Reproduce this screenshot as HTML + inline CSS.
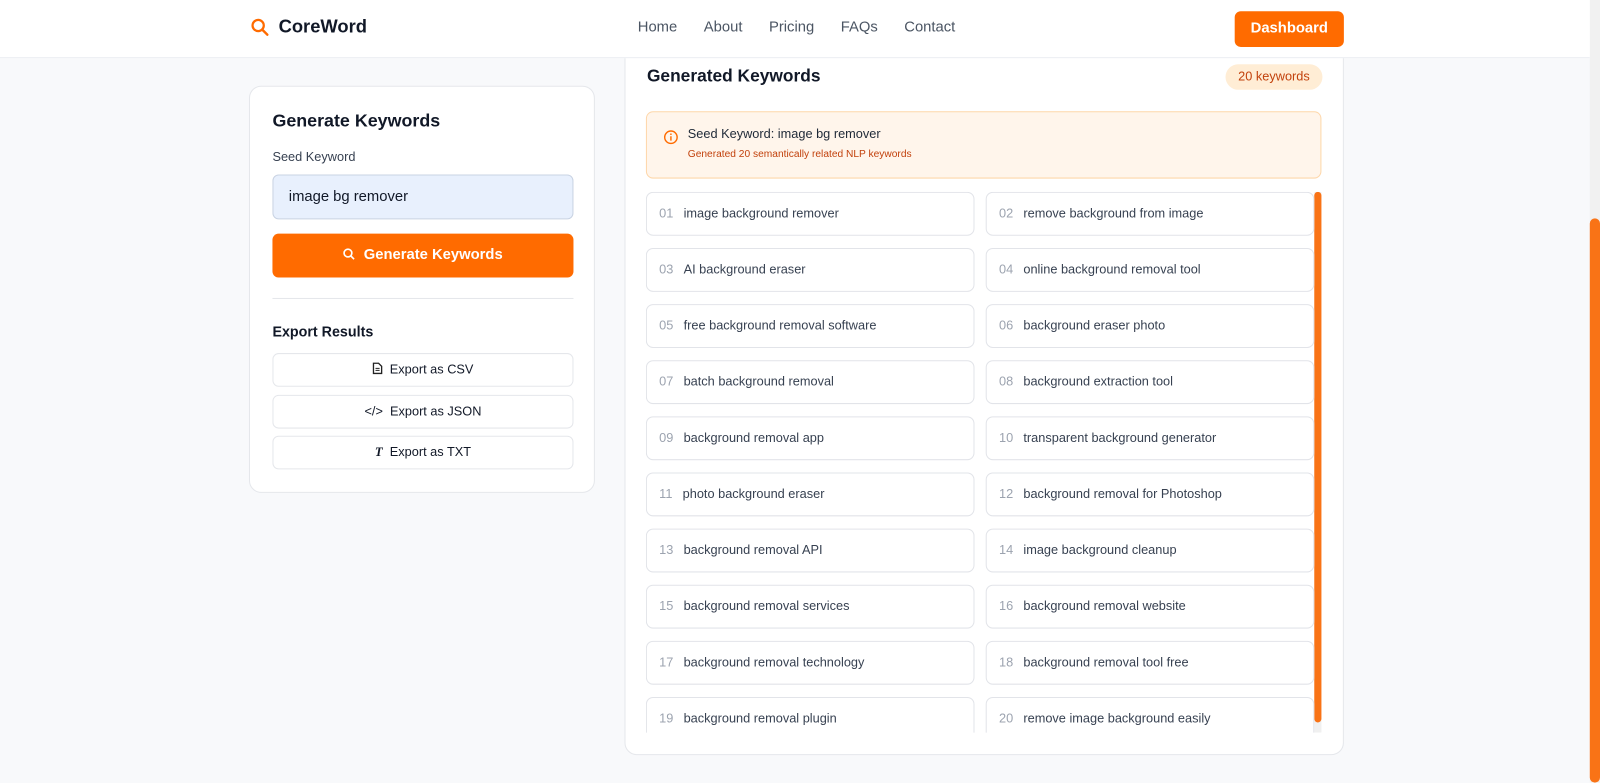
<!DOCTYPE html>
<html><head><style>
*{box-sizing:border-box;margin:0;padding:0}
body{width:1600px;height:783px;overflow:hidden;background:#f8f9fb;font-family:"Liberation Sans",sans-serif;color:#111827;position:relative}
#w{position:absolute;left:0;top:0;width:1568px;height:767px;transform:scale(1.020408);transform-origin:0 0}
.hdr{position:absolute;left:0;top:0;width:1558px;height:57px;background:#fff;border-bottom:1px solid #eceef2;z-index:5}
.logo{position:absolute;left:245px;top:16px;font-weight:bold;font-size:18px;display:flex;align-items:center;gap:8px}
.nav{position:absolute;left:625px;top:19px;font-size:14.5px;color:#4b5563}
.nav span{margin-right:26px}
.dash{position:absolute;left:1210px;top:11px;width:107px;height:35px;background:#ff6b00;color:#fff;border-radius:6px;font-weight:bold;font-size:14.5px;text-align:center;line-height:35px}
.lp{position:absolute;left:244px;top:84px;width:339px;height:399px;background:#fff;border:1px solid #e5e7eb;border-radius:12px}
.rp{position:absolute;left:612px;top:30px;width:705px;height:710px;background:#fff;border:1px solid #e5e7eb;border-radius:12px}
.inp{position:absolute;left:22px;top:86px;width:295px;height:44px;background:#e8f0fd;border:1px solid #c9d3e3;border-radius:6px;font-size:14.5px;padding:13px 15px}
.gen{position:absolute;left:22px;top:144px;width:295px;height:43px;background:#ff6b00;border-radius:6px;color:#fff;font-weight:bold;font-size:14.5px;text-align:center;line-height:43px}
.ex{position:absolute;left:22px;width:295px;height:33px;border:1px solid #e5e7eb;border-radius:6px;font-size:12.5px;text-align:center;line-height:31px}
.card{position:absolute;width:322px;height:43px;border:1px solid #e2e4e9;border-radius:7px;font-size:12.5px;color:#374151;line-height:41px;padding-left:12px;background:#fff}
.card b{font-weight:normal;color:#9ca3af;margin-right:10px}
</style></head><body>
<div id="w">
<div class="hdr">
<div class="logo"><svg width="20" height="20" viewBox="0 0 20 20"><circle cx="8" cy="8" r="5.5" fill="none" stroke="#ff6b00" stroke-width="2.2"/><line x1="12" y1="12" x2="17" y2="17" stroke="#ff6b00" stroke-width="2.4" stroke-linecap="round"/></svg>CoreWord</div>
<div class="nav"><span>Home</span><span>About</span><span>Pricing</span><span>FAQs</span><span>Contact</span></div>
<div class="dash">Dashboard</div>
</div>
<div class="lp">
<div style="position:absolute;left:22px;top:23px;font-size:17.5px;font-weight:bold">Generate Keywords</div>
<div style="position:absolute;left:22px;top:62px;font-size:12.5px;color:#374151">Seed Keyword</div>
<div class="inp">image bg remover</div>
<div class="gen"><svg width="12" height="12" viewBox="0 0 12 12" style="vertical-align:-1px"><circle cx="5" cy="5" r="3.8" fill="none" stroke="#fff" stroke-width="1.6"/><line x1="8" y1="8" x2="11" y2="11" stroke="#fff" stroke-width="1.6"/></svg>&nbsp; Generate Keywords</div>
<div style="position:absolute;left:22px;top:207px;width:295px;border-top:1px solid #e5e7eb"></div>
<div style="position:absolute;left:22px;top:232px;font-size:14px;font-weight:bold">Export Results</div>
<div class="ex" style="top:261px"><svg width="10" height="12" viewBox="0 0 10 12" style="vertical-align:-1px"><path d="M1 1h5l3 3v7H1z" fill="none" stroke="#222" stroke-width="1.3"/><path d="M3 6h4M3 8h4" stroke="#222" stroke-width="1"/></svg>&nbsp; Export as CSV</div>
<div class="ex" style="top:302px">&lt;/&gt;&nbsp; Export as JSON</div>
<div class="ex" style="top:342px"><i style="font-family:'Liberation Serif';font-weight:bold">T</i>&nbsp; Export as TXT</div>
</div>
<div class="rp">
<div style="position:absolute;left:21px;top:34px;font-size:17px;font-weight:bold">Generated Keywords</div>
<div style="position:absolute;left:588px;top:32px;width:95px;height:25px;background:#ffedd5;border-radius:13px;color:#c2410c;font-size:12.5px;text-align:center;line-height:25px">20 keywords</div>
<div style="position:absolute;left:20px;top:78px;width:662px;height:66px;background:#fff5eb;border:1px solid #fed7aa;border-radius:7px">
<svg style="position:absolute;left:16px;top:17px" width="15" height="15" viewBox="0 0 16 16"><circle cx="8" cy="8" r="6.5" fill="none" stroke="#ff6b00" stroke-width="1.5"/><line x1="8" y1="7" x2="8" y2="11.5" stroke="#ff6b00" stroke-width="1.5"/><circle cx="8" cy="4.8" r="0.9" fill="#ff6b00"/></svg>
<div style="position:absolute;left:40px;top:14px;font-size:12.5px;color:#1f2937">Seed Keyword: image bg remover</div>
<div style="position:absolute;left:40px;top:36px;font-size:10px;color:#c2410c">Generated 20 semantically related NLP keywords</div>
</div>
<div style="position:absolute;left:20px;top:157px;width:663px;height:530px;overflow:hidden">
<div style="position:absolute;left:655px;top:0;width:7px;height:530px;background:#f0f0f0"></div>
<div style="position:absolute;left:655px;top:0;width:7px;height:520px;background:#f97316;border-radius:4px"></div>
<div class="card" style="left:0;top:0"><b>01</b>image background remover</div>
<div class="card" style="left:333px;top:0"><b>02</b>remove background from image</div>
<div class="card" style="left:0;top:55px"><b>03</b>AI background eraser</div>
<div class="card" style="left:333px;top:55px"><b>04</b>online background removal tool</div>
<div class="card" style="left:0;top:110px"><b>05</b>free background removal software</div>
<div class="card" style="left:333px;top:110px"><b>06</b>background eraser photo</div>
<div class="card" style="left:0;top:165px"><b>07</b>batch background removal</div>
<div class="card" style="left:333px;top:165px"><b>08</b>background extraction tool</div>
<div class="card" style="left:0;top:220px"><b>09</b>background removal app</div>
<div class="card" style="left:333px;top:220px"><b>10</b>transparent background generator</div>
<div class="card" style="left:0;top:275px"><b>11</b>photo background eraser</div>
<div class="card" style="left:333px;top:275px"><b>12</b>background removal for Photoshop</div>
<div class="card" style="left:0;top:330px"><b>13</b>background removal API</div>
<div class="card" style="left:333px;top:330px"><b>14</b>image background cleanup</div>
<div class="card" style="left:0;top:385px"><b>15</b>background removal services</div>
<div class="card" style="left:333px;top:385px"><b>16</b>background removal website</div>
<div class="card" style="left:0;top:440px"><b>17</b>background removal technology</div>
<div class="card" style="left:333px;top:440px"><b>18</b>background removal tool free</div>
<div class="card" style="left:0;top:495px"><b>19</b>background removal plugin</div>
<div class="card" style="left:333px;top:495px"><b>20</b>remove image background easily</div>
</div>
</div>
<div style="position:absolute;left:1558px;top:0;width:10px;height:767px;background:#f1f1f1"></div>
<div style="position:absolute;left:1558px;top:214px;width:10px;height:553px;background:#f97316;border-radius:5px"></div>
</div>
</body></html>
